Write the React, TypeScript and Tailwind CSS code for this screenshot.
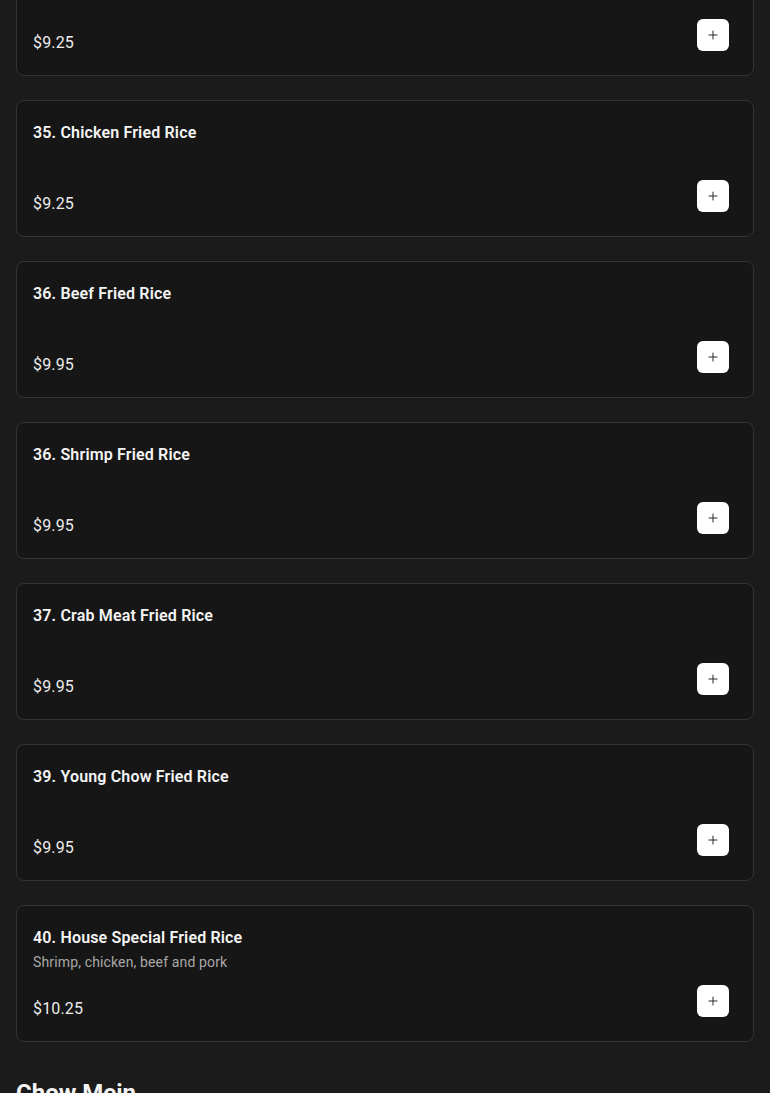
import { Plus } from "lucide-react";

type Item = { name: string; price: string; desc?: string };

const items: Item[] = [
  { name: "34. Pork Fried Rice", price: "$9.25" },
  { name: "35. Chicken Fried Rice", price: "$9.25" },
  { name: "36. Beef Fried Rice", price: "$9.95" },
  { name: "36. Shrimp Fried Rice", price: "$9.95" },
  { name: "37. Crab Meat Fried Rice", price: "$9.95" },
  { name: "39. Young Chow Fried Rice", price: "$9.95" },
  { name: "40. House Special Fried Rice", price: "$10.25", desc: "Shrimp, chicken, beef and pork" },
];

function MenuCard({ item }: { item: Item }) {
  return (
    <div className="flex h-[137px] flex-col rounded-lg border border-[#343434] bg-[#161616] px-4 pt-4">
      <div className="h-[63px]">
        <h3 className="pt-[4px] text-base leading-6 font-semibold tracking-[0.01em] text-[#f4f4f4]">
          {item.name}
        </h3>
        {item.desc && (
          <p className="mt-[2px] text-sm leading-5 tracking-[0.01em] text-[#a8a8a8]">{item.desc}</p>
        )}
      </div>
      <div className="flex items-start justify-between">
        <span className="pt-[12px] text-base leading-6 tracking-[0.01em] text-[#ececec]">{item.price}</span>
        <button
          type="button"
          className="mr-2 flex h-8 w-8 items-center justify-center rounded-md bg-white text-[#2a2a2a]"
          aria-label="Add"
        >
          <Plus className="h-3.5 w-3.5" strokeWidth={1.75} />
        </button>
      </div>
    </div>
  );
}

export default function App() {
  return (
    <div
      className="min-h-screen overflow-hidden bg-[#1b1b1b] px-4"
      style={{ fontFamily: "Roboto, 'Liberation Sans', sans-serif" }}
    >
      <div className="-mt-[61px] flex flex-col gap-6">
        {items.map((item, i) => (
          <MenuCard key={i} item={item} />
        ))}
      </div>
      <h2 className="mt-[35px] text-2xl leading-8 font-bold text-[#f4f4f4]">Chow Mein</h2>
      <div className="h-40" />
    </div>
  );
}
